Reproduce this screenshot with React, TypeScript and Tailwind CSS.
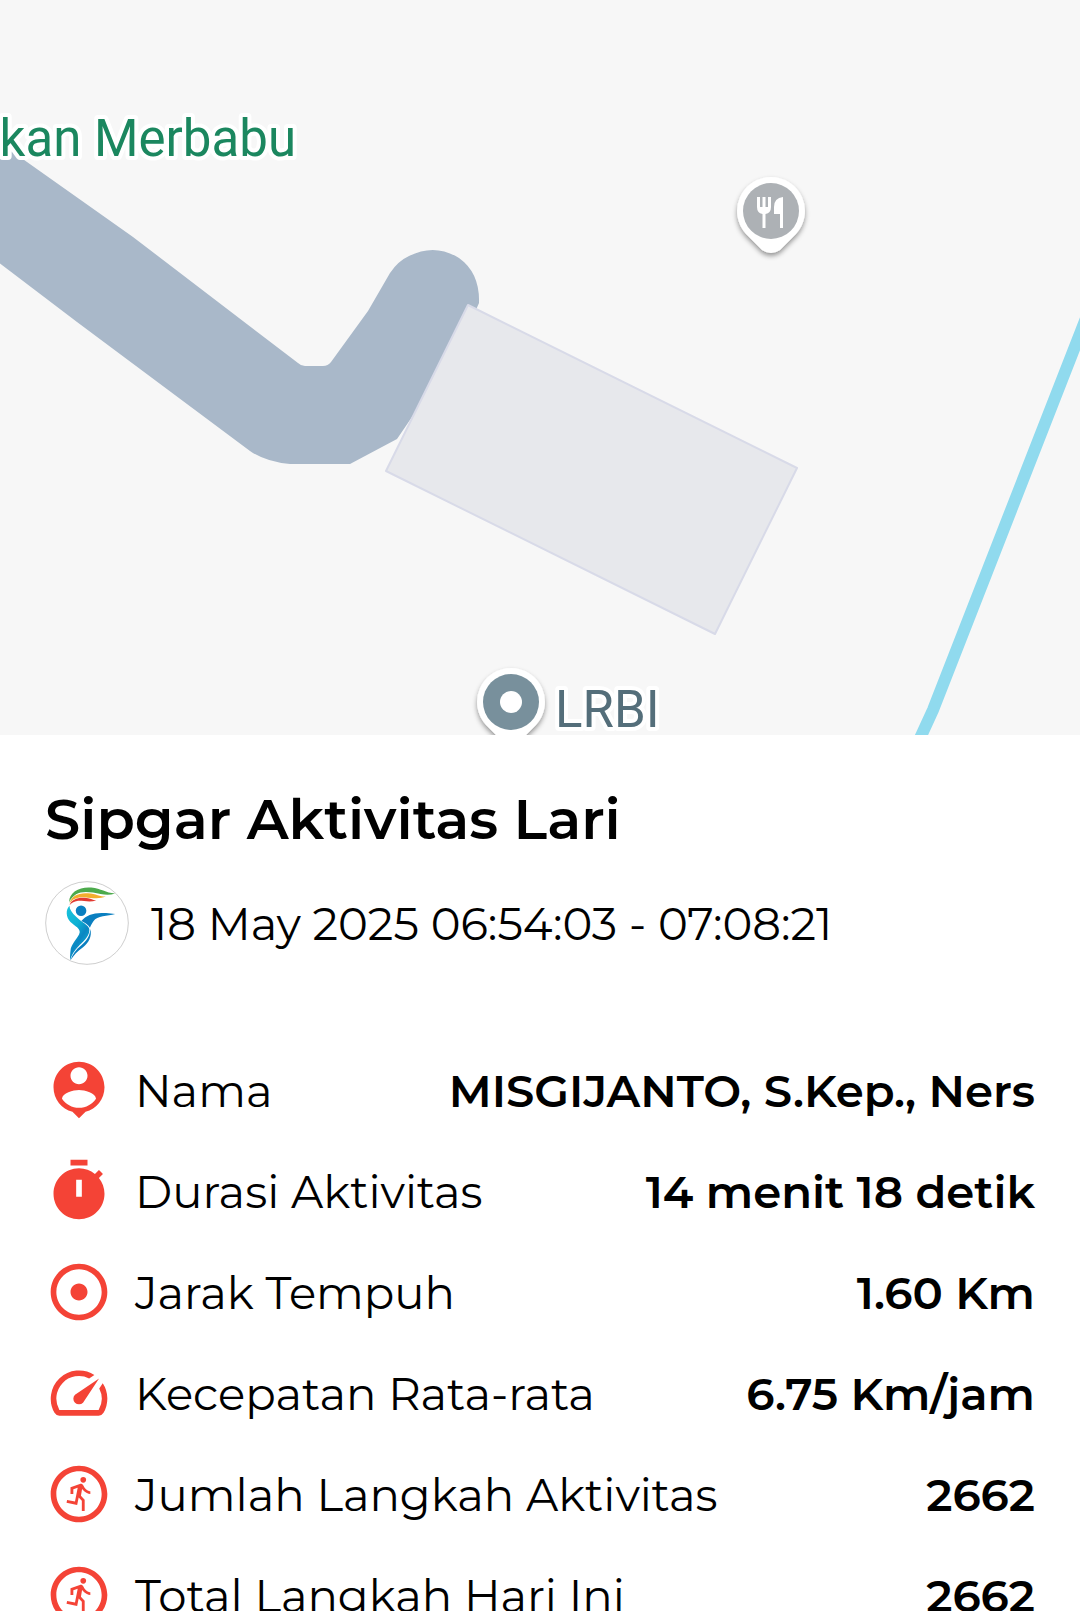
import type { ReactNode } from "react";
import { MdAdjust, MdOutlineRunCircle, MdSpeed } from "react-icons/md";

const mapLabel = {
  fontFamily: "Roboto, sans-serif",
  stroke: "#ffffff",
  strokeWidth: 8,
  strokeLinejoin: "round" as const,
  paintOrder: "stroke",
};

function PinBody() {
  return (
    <path
      d="M0-34A34 34 0 0 1 25 23L9 39Q0 45-9 39L-25 23A34 34 0 0 1 0-34Z"
      fill="#fff"
      filter="url(#pin-shadow)"
    />
  );
}

function ActivityMap() {
  return (
    <svg
      className="block h-[735px] w-full bg-[#f7f7f7]"
      viewBox="0 0 1080 735"
      preserveAspectRatio="xMidYMid slice"
      role="img"
      aria-label="Peta aktivitas"
    >
      <defs>
        <filter id="pin-shadow" x="-30%" y="-30%" width="160%" height="160%">
          <feDropShadow dx="0" dy="3" stdDeviation="2.5" floodColor="#000" floodOpacity="0.4" />
        </filter>
      </defs>
      <path
        d="M-10 136L27 162L133 237L298 363Q301 366 305 366H323Q328 366 331 362L368 311L390 273Q398 261 409 256Q435 243 459 258Q480 273 479 303L467 330L412 417L397 439L350 464H290Q266 462 250 451L77 322L-10 256Z"
        fill="#a9b8c9"
      />
      <path
        d="M468 305L797 468L715 634L386 471Z"
        fill="#e7e8ec"
        stroke="#d8dae8"
        strokeWidth="2"
        strokeLinejoin="round"
      />
      <path d="M1092 303L933 710L916 747" fill="none" stroke="#90daee" strokeWidth="12" />

      <text x="296" y="156" textAnchor="end" fontSize="51" fill="#1b875f" style={mapLabel}>
        kan Merbabu
      </text>

      <g transform="translate(771 211)">
        <PinBody />
        <circle r="28" fill="#adb1b5" />
        <path
          d="M-14-14h3v10h2.5v-10h3v10h2.5v-10h3v10q0 6-5.5 7v14h-3v-14q-5.500-1-5.500-7zM12-14v31h-3v-14h-6v-7q0-9 9-10z"
          fill="#fff"
        />
      </g>

      <g transform="translate(511 702)">
        <PinBody />
        <circle r="28" fill="#78909c" />
        <circle r="11" fill="#fff" />
      </g>
      <text x="555" y="727" fontSize="51" fill="#546e7a" style={mapLabel}>
        LRBI
      </text>
    </svg>
  );
}

function SipgarLogo() {
  return (
    <svg className="size-[84px] shrink-0" viewBox="45 63 254 254" role="img" aria-label="Sipgar">
      <defs>
        <linearGradient id="body" x1="0" y1="0" x2="0.6" y2="1">
          <stop offset="0" stopColor="#19c3dc" />
          <stop offset="0.45" stopColor="#0db0d3" />
          <stop offset="0.7" stopColor="#0a86c2" />
          <stop offset="1" stopColor="#12b4d6" />
        </linearGradient>
      </defs>
      <circle cx="172" cy="190" r="125" fill="#fff" stroke="#b5b5b5" strokeWidth="2" />
      <path
        d="M118 127C118 96 150 80 185 83C215 86 228 99 257 101C235 108 215 103 190 98C155 93 133 98 118 127Z"
        fill="#4caa4c"
      />
      <path
        d="M119 131C125 108 145 98 175 100C200 102 210 110 229 110C210 118 190 115 165 112C140 111 127 118 119 131Z"
        fill="#f2ae2e"
      />
      <path
        d="M119 137C123 120 145 112 165 114C180 115 190 121 200 122C180 128 160 122 145 123C132 125 124 130 119 137Z"
        fill="#e23a32"
      />
      <circle cx="154" cy="153" r="16" fill="#0a7fc0" />
      <path
        d="M119 138C107 150 108 172 122 187C137 200 151 207 150 218C147 235 122 253 122 275C121 288 120 295 121 303C124 288 133 273 149 257C167 241 181 225 179 208C176 196 155 187 140 172C126 159 119 149 119 138Z"
        fill="url(#body)"
      />
      <path
        d="M155 184C170 165 195 157 230 160L257 163C235 169 202 169 192 184C186 193 183 199 181 204C175 195 165 188 155 184Z"
        fill="#0a7fc0"
      />
      <path
        d="M182 208C188 230 177 250 160 263C143 275 132 287 122 303C127 286 138 271 154 258C170 244 181 230 182 208Z"
        fill="#0a7fc0"
      />
    </svg>
  );
}

function PersonPinIcon() {
  return (
    <svg className="size-[68px]" viewBox="0 0 24 24" fill="currentColor" aria-hidden="true">
      <path d="M12 2c-4.97 0-9 4.03-9 9 0 4.17 2.84 7.67 6.69 8.69L12 22l2.31-2.31C18.16 18.67 21 15.17 21 11c0-4.97-4.03-9-9-9zm0 2c1.66 0 3 1.34 3 3s-1.34 3-3 3-3-1.34-3-3 1.34-3 3-3zm0 14.3c-2.5 0-4.71-1.28-6-3.22.03-1.99 4-3.08 6-3.08 1.99 0 5.97 1.09 6 3.08-1.29 1.94-3.5 3.22-6 3.22z" />
    </svg>
  );
}

function TimerIcon() {
  return (
    <svg className="size-[68px]" viewBox="0 0 24 24" fill="currentColor" aria-hidden="true">
      <path
        fillRule="evenodd"
        d="M15 1H9v2h6V1zm-4 13h2V8h-2v6zm8.03-6.61l1.42-1.42c-.43-.51-.9-.99-1.41-1.41l-1.42 1.42C16.07 4.74 14.12 4 12 4c-4.97 0-9 4.03-9 9s4.02 9 9 9 9-4.03 9-9c0-2.12-.74-4.07-1.97-5.61z"
      />
    </svg>
  );
}

const stats: { icon: ReactNode; label: string; value: string }[] = [
  { icon: <PersonPinIcon />, label: "Nama", value: "MISGIJANTO, S.Kep., Ners" },
  { icon: <TimerIcon />, label: "Durasi Aktivitas", value: "14 menit 18 detik" },
  { icon: <MdAdjust className="size-[68px]" />, label: "Jarak Tempuh", value: "1.60 Km" },
  { icon: <MdSpeed className="size-[68px]" />, label: "Kecepatan Rata-rata", value: "6.75 Km/jam" },
  { icon: <MdOutlineRunCircle className="size-[68px]" />, label: "Jumlah Langkah Aktivitas", value: "2662" },
  { icon: <MdOutlineRunCircle className="size-[68px]" />, label: "Total Langkah Hari Ini", value: "2662" },
];

export default function App() {
  return (
    <main className="h-screen overflow-hidden bg-white font-['Montserrat','Inter',sans-serif] text-black">
      <ActivityMap />
      <section className="px-[45px] pt-[49px]">
        <h1 className="text-[56px] leading-[70px] font-semibold whitespace-nowrap">Sipgar Aktivitas Lari</h1>
        <div className="mt-[27px] flex items-center gap-[22px]">
          <SipgarLogo />
          <p className="pt-[2px] text-[45px] leading-[54px] whitespace-nowrap">18 May 2025 06:54:03 - 07:08:21</p>
        </div>
        <dl className="mt-[91px] flex flex-col gap-[33px]">
          {stats.map((s) => (
            <div key={s.label} className="flex items-center text-[45px] leading-[54px] whitespace-nowrap">
              <dt className="flex items-center gap-[22px]">
                <span className="shrink-0 text-[#f44336]">{s.icon}</span>
                <span className="pt-[2px]">{s.label}</span>
              </dt>
              <dd className="ml-auto pt-[2px] font-semibold">{s.value}</dd>
            </div>
          ))}
        </dl>
      </section>
    </main>
  );
}
